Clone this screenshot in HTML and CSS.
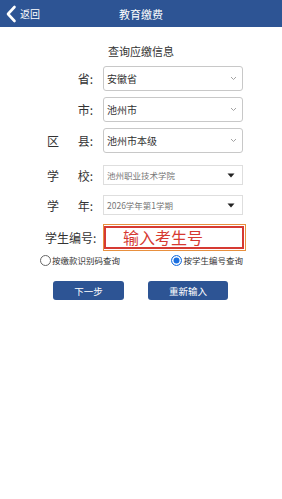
FILE: index.html
```html
<!DOCTYPE html>
<html lang="zh-CN">
<head>
    <meta charset="UTF-8">
    <meta name="viewport" content="width=device-width, initial-scale=1.0">
    <title>教育缴费</title>
    <link rel="stylesheet" href="styles.css">
</head>
<body>

    <!-- Top bar -->
    <div class="topbar">
        <div class="back">
            <svg width="12" height="18" viewBox="0 0 12 18"><path d="M9.5 2 L3 9 L9.5 16" fill="none" stroke="#fff" stroke-width="2.6" stroke-linecap="round" stroke-linejoin="round"/></svg>
            <span>返回</span>
        </div>
        <div class="topbar-title">教育缴费</div>
        <div></div>
    </div>

    <h2 class="page-title">查询应缴信息</h2>

    <!-- Query form -->
    <div class="form">
        <div class="row row-big">
            <div class="label right">省:</div>
            <div class="select rounded">
                <span>安徽省</span>
                <svg class="chev" width="7" height="5" viewBox="0 0 7 5"><path d="M1 1 L3.5 3.5 L6 1" fill="none" stroke="#999" stroke-width="0.9"/></svg>
            </div>
        </div>
        <div class="row row-big">
            <div class="label right">市:</div>
            <div class="select rounded">
                <span>池州市</span>
                <svg class="chev" width="7" height="5" viewBox="0 0 7 5"><path d="M1 1 L3.5 3.5 L6 1" fill="none" stroke="#999" stroke-width="0.9"/></svg>
            </div>
        </div>
        <div class="row row-big">
            <div class="label spread"><span>区</span><span>县:</span></div>
            <div class="select rounded">
                <span>池州市本级</span>
                <svg class="chev" width="7" height="5" viewBox="0 0 7 5"><path d="M1 1 L3.5 3.5 L6 1" fill="none" stroke="#999" stroke-width="0.9"/></svg>
            </div>
        </div>
        <div class="row row-small first-small">
            <div class="label spread"><span>学</span><span>校:</span></div>
            <div class="select flat">
                <span>池州职业技术学院</span>
                <svg class="tri" width="8" height="5" viewBox="0 0 8 5"><path d="M0.5 0.5 L7.5 0.5 L4 4.5 Z" fill="#222"/></svg>
            </div>
        </div>
        <div class="row row-small">
            <div class="label spread"><span>学</span><span>年:</span></div>
            <div class="select flat">
                <span>2026学年第1学期</span>
                <svg class="tri" width="8" height="5" viewBox="0 0 8 5"><path d="M0.5 0.5 L7.5 0.5 L4 4.5 Z" fill="#222"/></svg>
            </div>
        </div>
        <div class="row row-input">
            <div class="label">学生编号:</div>
            <div class="student-input">
                <div class="hint-box">输入考生号</div>
            </div>
        </div>
    </div>

    <div class="radios">
        <div class="radio-item"><span class="radio"></span>按缴款识别码查询</div>
        <div class="radio-item"><span class="radio checked"></span>按学生编号查询</div>
    </div>

    <div class="buttons">
        <button class="btn btn-next">下一步</button>
        <button class="btn btn-reset">重新输入</button>
    </div>

</body>
</html>
```

FILE: styles.css
```css
body {
    margin: 0;
    padding: 0;
    background-color: #fff;
    font-family: "Noto Sans CJK SC", "Noto Sans", sans-serif;
    color: #333;
}
.topbar {
    height: 27px;
    background-color: #2d5494;
    color: #fff;
    display: grid;
    grid-template-columns: 1fr auto 1fr;
    align-items: center;
}
.back {
    display: flex;
    align-items: center;
    padding-left: 5px;
    font-size: 10px;
}
.back svg {
    margin-right: 3px;
}
.topbar-title {
    font-size: 11px;
}
.page-title {
    margin: 16px 0 0;
    font-size: 11px;
    font-weight: normal;
    text-align: center;
    color: #333;
    line-height: 16px;
}
.form {
    margin-top: 7px;
    padding-left: 45px;
}
.row {
    display: flex;
    align-items: center;
    margin-bottom: 6px;
}
.row-big {
    height: 25px;
}
.row-small {
    height: 20px;
    margin-bottom: 10px;
}
.first-small {
    margin-top: 12px;
}
.row-input {
    height: 27px;
    margin-top: -1px;
    margin-bottom: 0;
}
.label {
    width: 52px;
    margin-right: 6px;
    font-size: 12px;
    color: #333;
    white-space: nowrap;
}
.right {
    text-align: right;
    padding-right: 4px;
    box-sizing: border-box;
}
.spread {
    display: flex;
    justify-content: space-between;
    padding-left: 2px;
    padding-right: 4px;
    box-sizing: border-box;
}
.select {
    width: 140px;
    height: 100%;
    box-sizing: border-box;
    display: flex;
    align-items: center;
    justify-content: space-between;
    padding: 0 5px 0 3px;
    background-color: #fff;
}
.rounded {
    border: 1px solid #c8c8c8;
    border-radius: 3px;
    font-size: 10px;
    color: #333;
}
.flat {
    border: 1px solid #dedede;
    font-size: 8.5px;
    color: #777;
    padding-right: 7px;
}
.student-input {
    width: 143px;
    height: 27px;
    box-sizing: border-box;
    border: 1px solid #e8903e;
    padding: 1px 1px 1px 0;
}
.hint-box {
    height: 100%;
    box-sizing: border-box;
    border: 2.5px solid #d63a32;
    color: #d63a32;
    font-size: 16px;
    line-height: 18px;
    padding-left: 17px;
}
.radios {
    display: flex;
    justify-content: space-between;
    width: 203px;
    margin: 3px 0 0 40px;
    font-size: 8.5px;
    color: #333;
}
.radio-item {
    display: flex;
    align-items: center;
}
.radio {
    width: 11px;
    height: 11px;
    box-sizing: border-box;
    border: 1px solid #666;
    border-radius: 50%;
    margin-right: 1px;
    background-color: #fff;
}
.radio.checked {
    border: 1.5px solid #1a6fe0;
    box-shadow: inset 0 0 0 1.5px #fff, inset 0 0 0 6px #1a6fe0;
}
.buttons {
    display: flex;
    justify-content: center;
    gap: 24px;
    margin-top: 15px;
    padding-right: 1px;
}
.btn {
    height: 19px;
    border: none;
    border-radius: 3px;
    background-color: #2d5494;
    color: #fff;
    font-family: "Noto Sans CJK SC", sans-serif;
    font-size: 9.5px;
    padding: 0;
}
.btn-next {
    width: 71px;
}
.btn-reset {
    width: 80px;
}
```
